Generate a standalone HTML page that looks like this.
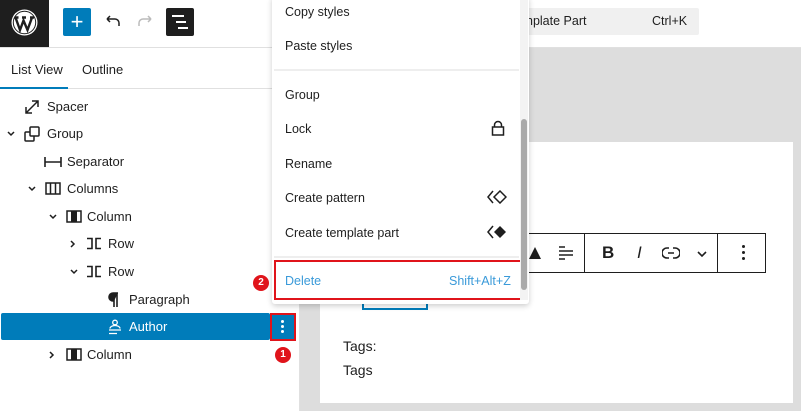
<!DOCTYPE html>
<html><head><meta charset="utf-8"><style>
*{box-sizing:border-box;margin:0;padding:0}
body{width:801px;height:411px;overflow:hidden;background:#fff;font-family:"Liberation Sans",sans-serif;font-size:13px;color:#1e1e1e;position:relative}
.abs{position:absolute}
.row{position:absolute;left:0;width:270px;height:27px;line-height:27px}
.row span,.row svg{position:absolute}
.row svg{top:6px}
.mi{position:absolute;left:285px;font-size:12.5px;color:#1e1e1e}
</style></head><body>
<!-- top bar -->
<div class="abs" style="left:0;top:0;width:49px;height:47px;background:#1e1e1e"></div>
<svg class="abs" style="left:10px;top:8px" width="29" height="29" viewBox="0 0 29 29"><circle cx="14.5" cy="14.5" r="13" fill="#fff"/><circle cx="14.5" cy="14.5" r="11.2" fill="none" stroke="#1e1e1e" stroke-width="1"/><path d="M5.5 9.5 L10 22 L13.5 12.5 L17.5 22 L22 9.5 M4.5 9.5h4 M12 9.5h4 M20 9.5h4" stroke="#1e1e1e" stroke-width="2.4" fill="none"/></svg>
<div class="abs" style="left:63px;top:8px;width:28px;height:28px;background:#007cba;border-radius:2px;color:#fff;font-size:22px;line-height:27px;text-align:center">+</div>
<svg class="abs" style="left:103px;top:12px" width="18" height="18" viewBox="0 0 18 18"><path d="M4 7h8a4 4 0 0 1 4 4v3M4 7l3-3M4 7l3 3" stroke="#1e1e1e" stroke-width="1.5" fill="none"/></svg>
<svg class="abs" style="left:137px;top:12px" width="18" height="18" viewBox="0 0 18 18"><path d="M14 7H6a4 4 0 0 0-4 4v3M14 7l-3-3M14 7l-3 3" stroke="#bbb" stroke-width="1.5" fill="none"/></svg>
<div class="abs" style="left:166px;top:8px;width:28px;height:28px;background:#1e1e1e;border-radius:2px"></div>
<div class="abs" style="left:172px;top:15px;width:12px;height:2px;background:#fff"></div>
<div class="abs" style="left:176px;top:21px;width:10px;height:2px;background:#fff"></div>
<div class="abs" style="left:178px;top:27px;width:10px;height:2px;background:#fff"></div>
<div class="abs" style="left:430px;top:8px;width:269px;height:27px;background:#f0f0f0;border-radius:2px"></div>
<div class="abs" style="left:526px;top:14px;font-size:12.5px">nplate Part</div>
<div class="abs" style="left:652px;top:14px;font-size:12.5px">Ctrl+K</div>
<div class="abs" style="left:0;top:47px;width:801px;height:1px;background:#e0e0e0"></div>
<!-- canvas -->
<div class="abs" style="left:300px;top:48px;width:501px;height:363px;background:#ddd"></div>
<div class="abs" style="left:320px;top:142px;width:473px;height:261px;background:#fff"></div>
<div class="abs" style="left:343px;top:338px;font-size:14px">Tags:</div>
<div class="abs" style="left:343px;top:362px;font-size:14px">Tags</div>
<div class="abs" style="left:362px;top:298px;width:66px;height:12px;border:2px solid #007cba;border-top:none"></div>
<!-- block toolbar -->
<div class="abs" style="left:500px;top:233px;width:266px;height:40px;border:1px solid #1e1e1e;background:#fff"></div>
<div class="abs" style="left:584px;top:233px;width:1px;height:40px;background:#1e1e1e"></div>
<div class="abs" style="left:717px;top:233px;width:1px;height:40px;background:#1e1e1e"></div>
<svg class="abs" style="left:528px;top:246px" width="14" height="14"><path d="M7 1L13 13H1Z" fill="#1e1e1e"/></svg>
<svg class="abs" style="left:557px;top:244px" width="18" height="18"><path d="M2 3h6M2 7h14M2 11h14M2 15h6" stroke="#1e1e1e" stroke-width="1.5"/></svg>
<div class="abs" style="left:602px;top:243px;font-size:17px;font-weight:bold">B</div>
<div class="abs" style="left:637px;top:243px;font-size:17px;font-style:italic">I</div>
<svg class="abs" style="left:662px;top:246px" width="18" height="14"><path d="M7 2H5a5 5 0 0 0 0 10h2M11 2h2a5 5 0 0 1 0 10h-2M6 7h6" stroke="#1e1e1e" stroke-width="1.6" fill="none"/></svg>
<svg class="abs" style="left:696px;top:250px" width="12" height="8"><path d="M2 2l4 4 4-4" stroke="#1e1e1e" stroke-width="1.6" fill="none"/></svg>
<div class="abs" style="left:742px;top:245px;width:3px;height:3px;background:#1e1e1e;border-radius:50%;box-shadow:0 6px 0 #1e1e1e,0 12px 0 #1e1e1e"></div>
<!-- sidebar -->
<div class="abs" style="left:299px;top:48px;width:1px;height:363px;background:#e0e0e0"></div>
<div class="abs" style="left:11px;top:62px;font-size:13px">List View</div>
<div class="abs" style="left:82px;top:62px;font-size:13px">Outline</div>
<div class="abs" style="left:0;top:88px;width:300px;height:1px;background:#e0e0e0"></div>
<div class="abs" style="left:0;top:87px;width:68px;height:2px;background:#007cba"></div>

<div class="row" style="top:93px"><svg style="left:24px" width="16" height="16"><path d="M2 14L14 2M8 2h6v6M2 8v6h6" stroke="#1e1e1e" stroke-width="1.5" fill="none"/></svg><span style="left:47px">Spacer</span></div>
<div class="row" style="top:120px"><svg style="left:6px;top:10px" width="10" height="8"><path d="M2 2l3 3 3-3" stroke="#1e1e1e" stroke-width="1.5" fill="none"/></svg><svg style="left:24px" width="16" height="16"><rect x="1" y="6" width="9" height="9" rx="1" stroke="#1e1e1e" stroke-width="1.5" fill="none"/><rect x="6" y="1" width="9" height="9" rx="1" stroke="#1e1e1e" stroke-width="1.5" fill="#fff"/></svg><span style="left:47px">Group</span></div>
<div class="row" style="top:148px"><svg style="left:44px" width="18" height="16"><path d="M1 3v10M17 3v10M1 8h16" stroke="#1e1e1e" stroke-width="1.6" fill="none"/></svg><span style="left:67px">Separator</span></div>
<div class="row" style="top:175px"><svg style="left:27px;top:10px" width="10" height="8"><path d="M2 2l3 3 3-3" stroke="#1e1e1e" stroke-width="1.5" fill="none"/></svg><svg style="left:45px" width="16" height="15"><rect x="1" y="2" width="14" height="11" stroke="#1e1e1e" stroke-width="1.5" fill="none"/><path d="M5.5 2v11M10.5 2v11" stroke="#1e1e1e" stroke-width="1.5"/></svg><span style="left:67px">Columns</span></div>
<div class="row" style="top:203px"><svg style="left:48px;top:10px" width="10" height="8"><path d="M2 2l3 3 3-3" stroke="#1e1e1e" stroke-width="1.5" fill="none"/></svg><svg style="left:66px" width="16" height="15"><rect x="1" y="2" width="14" height="11" stroke="#1e1e1e" stroke-width="1.5" fill="none"/><rect x="5" y="2" width="6" height="11" fill="#1e1e1e"/></svg><span style="left:87px">Column</span></div>
<div class="row" style="top:230px"><svg style="left:69px;top:9px" width="8" height="10"><path d="M2 2l3 3-3 3" stroke="#1e1e1e" stroke-width="1.5" fill="none"/></svg><svg style="left:86px" width="16" height="15"><path d="M1 2.5h5v10H1M15 2.5h-5v10h5" stroke="#1e1e1e" stroke-width="1.6" fill="none"/></svg><span style="left:108px">Row</span></div>
<div class="row" style="top:258px"><svg style="left:69px;top:10px" width="10" height="8"><path d="M2 2l3 3 3-3" stroke="#1e1e1e" stroke-width="1.5" fill="none"/></svg><svg style="left:86px" width="16" height="15"><path d="M1 2.5h5v10H1M15 2.5h-5v10h5" stroke="#1e1e1e" stroke-width="1.6" fill="none"/></svg><span style="left:108px">Row</span></div>
<div class="row" style="top:286px"><svg style="left:107px" width="14" height="16"><path d="M7 1v14M10 1v14M11 1H6a4 4 0 0 0 0 8h1" stroke="#1e1e1e" stroke-width="1.6" fill="#1e1e1e"/></svg><span style="left:129px">Paragraph</span></div>
<div class="abs" style="left:1px;top:313px;width:269px;height:27px;background:#007cba;border-radius:2px"></div>
<div class="abs" style="left:270px;top:313px;width:26px;height:28px;background:#007cba;border:2px solid #e0141b"></div>
<div class="abs" style="left:281px;top:320px;width:3px;height:3px;background:#fff;border-radius:50%;box-shadow:0 5px 0 #fff,0 10px 0 #fff"></div>
<div class="row" style="top:313px;color:#fff"><svg style="left:107px" width="16" height="16"><circle cx="8" cy="3.5" r="2.3" stroke="#fff" stroke-width="1.3" fill="none"/><path d="M3 9.5a5 3 0 0 1 10 0M2 11h12M2 14.5h8" stroke="#fff" stroke-width="1.3" fill="none"/></svg><span style="left:129px">Author</span></div>
<div class="row" style="top:341px"><svg style="left:48px;top:9px" width="8" height="10"><path d="M2 2l3 3-3 3" stroke="#1e1e1e" stroke-width="1.5" fill="none"/></svg><svg style="left:66px" width="16" height="15"><rect x="1" y="2" width="14" height="11" stroke="#1e1e1e" stroke-width="1.5" fill="none"/><rect x="5" y="2" width="6" height="11" fill="#1e1e1e"/></svg><span style="left:87px">Column</span></div>
<div class="abs" style="left:275px;top:347px;width:16px;height:16px;border-radius:50%;background:#e0141b;color:#fff;font-size:10px;line-height:16px;text-align:center;font-weight:bold">1</div>
<div class="abs" style="left:253px;top:275px;width:16px;height:16px;border-radius:50%;background:#e0141b;color:#fff;font-size:10px;line-height:16px;text-align:center;font-weight:bold">2</div>
<!-- menu -->
<div class="abs" style="left:272px;top:-4px;width:257px;height:308px;background:#fff;border-radius:3px;box-shadow:0 2px 6px rgba(0,0,0,.2)"></div>
<div class="mi" style="top:5px">Copy styles</div>
<div class="mi" style="top:39px">Paste styles</div>
<div class="abs" style="left:274px;top:69px;width:245px;height:2px;background:#eee"></div>
<div class="mi" style="top:88px">Group</div>
<div class="mi" style="top:122px">Lock</div>
<svg class="abs" style="left:491px;top:120px" width="14" height="16"><path d="M3.5 7V5a3.5 3.5 0 0 1 7 0v2" stroke="#1e1e1e" stroke-width="1.5" fill="none"/><rect x="1.5" y="7" width="11" height="8" stroke="#1e1e1e" stroke-width="1.5" fill="none"/></svg>
<div class="mi" style="top:157px">Rename</div>
<div class="mi" style="top:191px">Create pattern</div>
<svg class="abs" style="left:487px;top:190px" width="20" height="14"><path d="M6 1L1 7l5 6M13 1l6 6-6 6-6-6z" stroke="#1e1e1e" stroke-width="1.5" fill="none"/></svg>
<div class="mi" style="top:226px">Create template part</div>
<svg class="abs" style="left:487px;top:225px" width="20" height="14"><path d="M6 1L1 7l5 6" stroke="#1e1e1e" stroke-width="1.5" fill="none"/><path d="M13 1l6 6-6 6-6-6z" fill="#1e1e1e"/></svg>
<div class="abs" style="left:274px;top:256px;width:245px;height:2px;background:#eee"></div>
<div class="abs" style="left:274px;top:260px;width:249px;height:40px;border:2px solid #e0141b"></div>
<div class="mi" style="top:274px;color:#3a9ad9">Delete</div>
<div class="abs" style="left:449px;top:274px;font-size:12.5px;color:#3a9ad9">Shift+Alt+Z</div>
<div class="abs" style="left:520px;top:0;width:8px;height:300px;background:#f3f3f3"></div>
<div class="abs" style="left:521px;top:119px;width:6px;height:171px;background:#aaa;border-radius:3px"></div>
</body></html>
